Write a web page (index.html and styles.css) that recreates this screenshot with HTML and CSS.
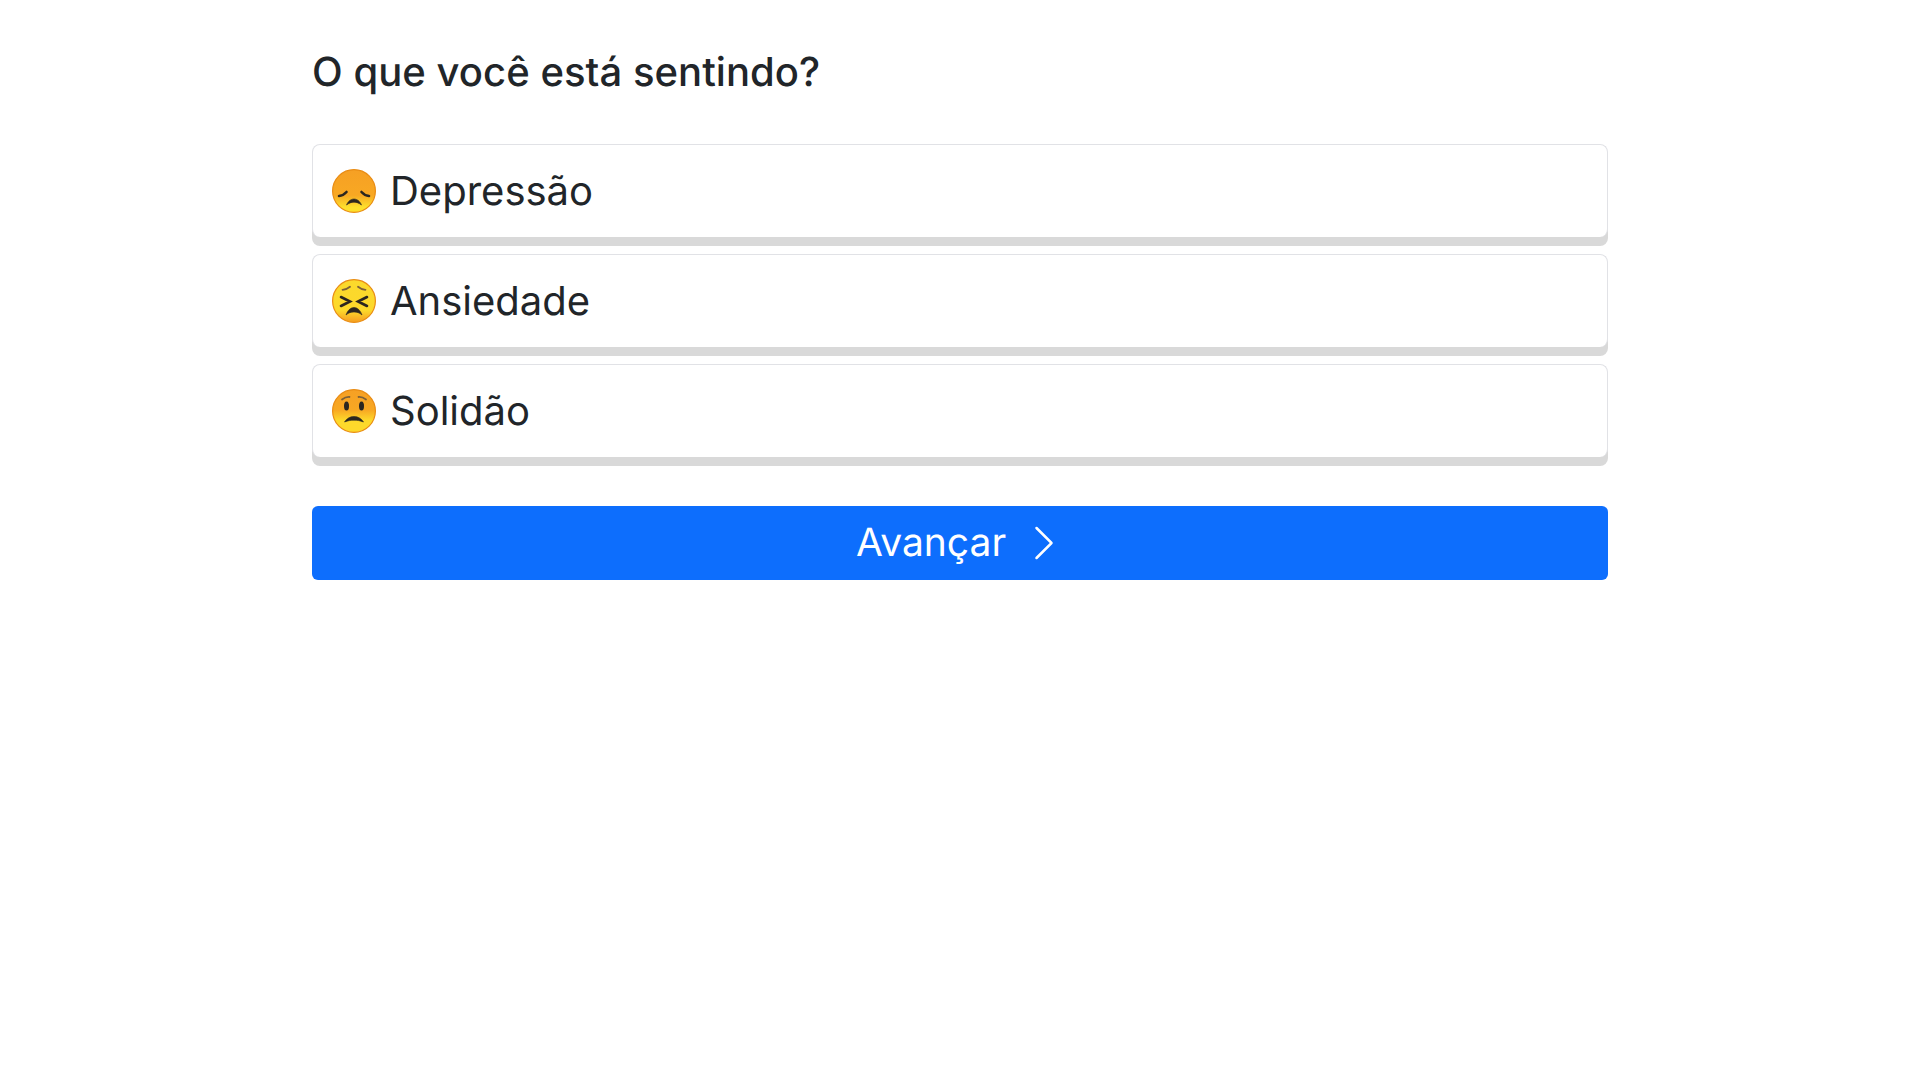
FILE: index.html
```html
<!DOCTYPE html>
<html lang="pt">
<head>
<meta charset="utf-8">
<title>O que você está sentindo?</title>
<link rel="stylesheet" href="styles.css">
</head>
<body>
<svg class="defs" width="0" height="0" aria-hidden="true">
  <defs>
    <linearGradient id="grad-orange" x1="0" y1="0" x2="0" y2="1">
      <stop offset="0" stop-color="#f6a024"/>
      <stop offset="0.6" stop-color="#f8a823"/>
      <stop offset="0.88" stop-color="#fde02c"/>
    </linearGradient>
    <linearGradient id="grad-yellow" x1="0" y1="0" x2="0" y2="1">
      <stop offset="0" stop-color="#fbd92c"/>
      <stop offset="0.72" stop-color="#fdd92b"/>
      <stop offset="0.95" stop-color="#f6a623"/>
    </linearGradient>
    <linearGradient id="grad-worried" x1="0" y1="0" x2="0" y2="1">
      <stop offset="0" stop-color="#f6a024"/>
      <stop offset="0.48" stop-color="#f8a823"/>
      <stop offset="0.72" stop-color="#fdd92b"/>
    </linearGradient>
  </defs>
</svg>
<main class="container">
  <h1 class="title">O que você está sentindo?</h1>
  <div class="options">
    <div class="option">
      <svg class="emoji" viewBox="0 0 44 44" aria-hidden="true">
        <circle cx="22" cy="22" r="21.4" fill="url(#grad-orange)" stroke="#e98c14" stroke-width="1.2"/>
        <path class="ink" d="M7 27C9.500 26.800 12.500 25.200 14.500 23M37 27C34.500 26.800 31.500 25.200 29.500 23"/>
        <path class="mouth" d="M14.500 36C16 32 19 30 22 30S28 32 29.500 36C27 34 24.500 33.200 22 33.200S17 34 14.500 36Z"/>
      </svg>
      <span>Depressão</span>
    </div>
    <div class="option">
      <svg class="emoji" viewBox="0 0 44 44" aria-hidden="true">
        <circle cx="22" cy="22" r="21.4" fill="url(#grad-yellow)" stroke="#e98c14" stroke-width="1.2"/>
        <path class="brow" d="M10.500 10.800C13 10.600 16 9.500 18 7.800M33.500 10.800C31 10.600 28 9.500 26 7.800"/>
        <path class="ink" d="M9 18 18 22.500 9 27M35 18 26 22.500 35 27"/>
        <path class="mouth" d="M14 36C15.500 31.500 18.500 28.500 22 28.500S28.500 31.500 30 36C27.500 33.800 25 33 22 33S16.500 33.800 14 36Z"/>
      </svg>
      <span>Ansiedade</span>
    </div>
    <div class="option">
      <svg class="emoji" viewBox="0 0 44 44" aria-hidden="true">
        <circle cx="22" cy="22" r="21.4" fill="url(#grad-worried)" stroke="#e98c14" stroke-width="1.2"/>
        <path class="brow" d="M10 10.500C12 9 15 7.800 17.500 8M34 10.500C32 9 29 7.800 26.500 8"/>
        <ellipse class="eye" cx="14.500" cy="17" rx="2.500" ry="4.500"/>
        <ellipse class="eye" cx="29.500" cy="17" rx="2.500" ry="4.500"/>
        <path class="mouth" d="M12.500 33C14.500 29.500 18 27.500 22 27.500S29.500 29.500 31.500 33C28 31.600 25 31.200 22 31.200S16 31.600 12.500 33Z"/>
      </svg>
      <span>Solidão</span>
    </div>
  </div>
  <button class="next" type="button">
    <span>Avançar</span>
    <svg class="chevron" viewBox="0 0 16 16" aria-hidden="true"><path fill-rule="evenodd" d="M4.646 1.646a.5.5 0 0 1 .708 0l6 6a.5.5 0 0 1 0 .708l-6 6a.5.5 0 0 1-.708-.708L10.293 8 4.646 2.354a.5.5 0 0 1 0-.708z"/></svg>
  </button>
</main>
</body>
</html>
```
FILE: styles.css
```css
* { box-sizing: border-box; }
html, body { margin: 0; padding: 0; background: #fff; }
body { font-family: Inter, "Liberation Sans", sans-serif; color: #212529; text-rendering: geometricPrecision; }
.defs { display: block; height: 0; }
.container { width: 1320px; margin: 0 auto; padding: 48px 12px 0; }
.title { margin: 0 0 48px; font-size: 40px; line-height: 48px; font-weight: 500; letter-spacing: 0.05px; }
.options { display: flex; flex-direction: column; gap: 17px; margin-bottom: 49px; }
.option { display: flex; align-items: center; gap: 14px; height: 93px; padding: 0 18px 1px 19px; font-size: 40px; line-height: 48px; background: #fff; border: 1px solid #e1e2e6; border-bottom: 0; border-radius: 8px; box-shadow: 0 9px 0 #d9d9d9; }
.emoji { width: 44px; height: 44px; flex: none; }
.ink { fill: none; stroke: #2b2620; stroke-width: 2.6; stroke-linecap: round; stroke-linejoin: miter; }
.mouth { fill: #2b2620; stroke: #2b2620; stroke-width: 0.6; stroke-linejoin: round; }
.brow { fill: none; stroke: #7d6038; stroke-width: 1.8; stroke-linecap: round; }
.eye { fill: #2b2620; }
.next { display: flex; align-items: center; justify-content: center; gap: 18px; width: 100%; height: 74px; padding: 0; border: 0; border-radius: 6px; background: #0d6efd; color: #fff; font: 400 39px/48px Inter, "Liberation Sans", sans-serif; text-rendering: geometricPrecision; }
.chevron { width: 40px; height: 40px; fill: currentColor; }
```
